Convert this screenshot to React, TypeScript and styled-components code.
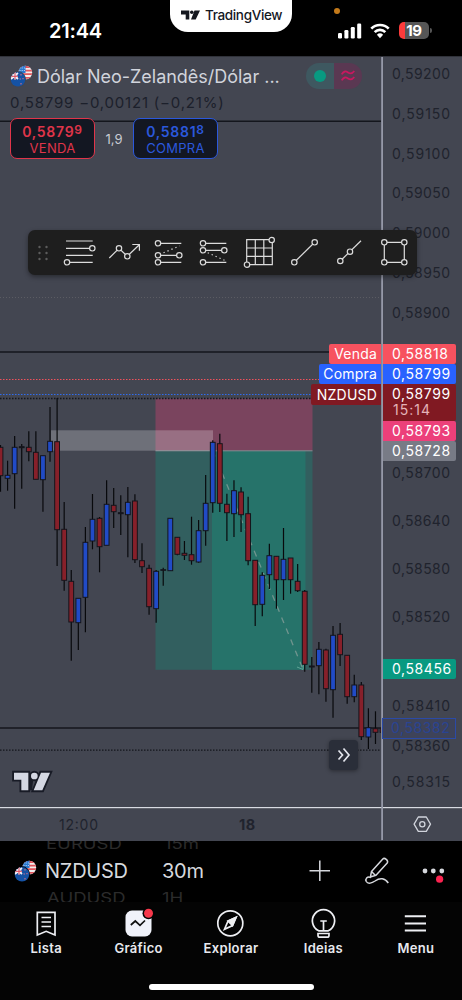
import React from "react";
import styled, { createGlobalStyle } from "styled-components";

const GlobalStyle = createGlobalStyle`
  * { box-sizing: border-box; }
  body { margin: 0; background: #000; }
  svg { display: block; }
`;

const Screen = styled.div`
  width: 462px;
  height: 1000px;
  display: flex;
  flex-direction: column;
  background: #000;
  overflow: hidden;
  font-family: Inter, "Liberation Sans", sans-serif;
  color: #fff;
  white-space: nowrap;
`;

/* Status bar */
const StatusBar = styled.header`
  height: 56px;
  flex: none;
  display: grid;
  grid-template-columns: 170px 122px 1fr;
`;
const Clock = styled.div`
  padding: 18px 0 0 49px;
  font-size: 20px;
  line-height: 26px;
  font-weight: 600;
  letter-spacing: -0.2px;
`;
const BrandPill = styled.div`
  height: 32px;
  display: flex;
  align-items: center;
  gap: 5px;
  padding: 0 0 3px 11px;
  background: #fff;
  color: #15181f;
  border-radius: 0 0 18px 18px;
  font-size: 13.5px;
  font-weight: 500;
  letter-spacing: -0.35px;
`;
const Indicators = styled.div`
  position: relative;
  display: flex;
  align-items: center;
  padding: 5px 0 0 46px;
`;
const MicDot = styled.span`
  position: absolute;
  left: 42px;
  top: 8px;
  width: 6px;
  height: 6px;
  border-radius: 50%;
  background: #c47a1a;
`;
const Battery = styled.div`
  width: 30px;
  height: 17px;
  margin-left: 9px;
  border-radius: 5px;
  background: linear-gradient(90deg, #fb3b3b 0 6px, #565656 6px);
  text-align: center;
  font-size: 15px;
  line-height: 17px;
  font-weight: 700;
  letter-spacing: -0.3px;
`;
const BatteryNub = styled.span`
  width: 2px;
  height: 5px;
  margin-left: 1px;
  border-radius: 0 2px 2px 0;
  background: #565656;
`;

/* Chart */
const Chart = styled.main`
  position: relative;
  height: 785px;
  flex: none;
  background: #434651;
`;
const Legend = styled.section`
  position: absolute;
  left: 10px;
  top: 6px;
  width: 360px;
  display: flex;
  flex-direction: column;
`;
const TitleRow = styled.div`
  display: flex;
  align-items: center;
  height: 28px;
`;
const Title = styled.div`
  width: 273px;
  flex: none;
  padding-left: 4px;
  font-size: 18px;
  color: #d1d4dc;
  letter-spacing: -0.02px;
`;
const StatusPill = styled.div`
  display: flex;
  width: 56px;
  height: 26px;
  border-radius: 13px;
  overflow: hidden;
`;
const PillHalf = styled.div<{ $bg: string }>`
  flex: 1;
  display: flex;
  align-items: center;
  justify-content: center;
  background: ${(p) => p.$bg};
`;
const LiveDot = styled.span`
  width: 12px;
  height: 12px;
  border-radius: 50%;
  background: #089981;
`;
const Change = styled.div`
  height: 26px;
  line-height: 26px;
  font-size: 15px;
  color: #1c202b;
  letter-spacing: 0.8px;
`;
const TradeRow = styled.div`
  display: flex;
  align-items: center;
  margin-top: 2px;
`;
const TradeButton = styled.button<{ $tone: string }>`
  width: 85px;
  height: 41px;
  padding: 1px 0 0;
  display: flex;
  flex-direction: column;
  align-items: center;
  justify-content: center;
  border: 1.5px solid ${(p) => p.$tone};
  border-radius: 7px;
  background: #131722;
  color: ${(p) => p.$tone};
  font-family: inherit;
`;
const Quote = styled.span`
  display: flex;
  font-size: 14px;
  line-height: 17px;
  font-weight: 600;
  letter-spacing: 0.7px;
`;
const Pip = styled.span`
  font-size: 12px;
  line-height: 13px;
`;
const Side = styled.span`
  font-size: 13px;
  line-height: 16px;
  letter-spacing: 0.3px;
`;
const Spread = styled.span`
  width: 38px;
  text-align: center;
  font-size: 13px;
  color: #c9cbd3;
`;

const Toolbar = styled.nav`
  position: absolute;
  left: 28px;
  top: 174px;
  width: 389px;
  height: 45px;
  display: flex;
  align-items: center;
  background: #1e1e1e;
  border-radius: 7px;
  box-shadow: 0 2px 5px rgba(0, 0, 0, 0.4);
`;
const Grip = styled.div`
  width: 29px;
  flex: none;
  padding-left: 9.5px;
`;

const TagStack = styled.div<{ $top: number }>`
  position: absolute;
  right: 6px;
  top: ${(p) => p.$top}px;
  display: flex;
  flex-direction: column;
  align-items: flex-end;
`;
const TagRow = styled.div`
  display: flex;
  align-items: flex-start;
`;
const TagName = styled.div<{ $bg: string; $w: number; $low?: boolean }>`
  width: ${(p) => p.$w}px;
  height: ${(p) => (p.$low ? 20.5 : 19.5)}px;
  line-height: ${(p) => (p.$low ? 22 : 20)}px;
  margin-right: 2px;
  padding-right: 4px;
  text-align: right;
  border-radius: 2px 0 0 2px;
  background: ${(p) => p.$bg};
  font-size: 14px;
  letter-spacing: 0.2px;
`;
const TagPrice = styled.div<{ $bg: string; $tall?: boolean }>`
  width: 73px;
  height: ${(p) => (p.$tall ? 36.5 : 20)}px;
  padding-left: 9px;
  border-radius: 0 2px 2px 0;
  background: ${(p) => p.$bg};
  font-size: 14px;
  line-height: 19px;
  letter-spacing: 0.58px;
`;
const Countdown = styled.div`
  padding-left: 1px;
  line-height: 14px;
  letter-spacing: 1px;
  color: #e3b3b8;
`;
const LastPrice = styled.div`
  width: 74px;
  height: 21px;
  padding-left: 8px;
  border: 1.5px solid #2b4aa6;
  background: #3e4359;
  color: #2a4391;
  font-size: 14px;
  line-height: 18px;
  letter-spacing: 0.58px;
`;
const ScrollButton = styled.button`
  position: absolute;
  left: 329px;
  top: 684px;
  width: 29px;
  height: 30px;
  padding: 0;
  display: flex;
  align-items: center;
  justify-content: center;
  border: 0;
  border-radius: 4px;
  background: #2a2e39;
  box-shadow: 0 1px 4px rgba(0, 0, 0, 0.4);
`;

/* Symbol bar */
const SymbolBar = styled.section`
  height: 61px;
  flex: none;
  display: flex;
  align-items: center;
  padding: 0 0 1px 14px;
  overflow: hidden;
`;
const Wheel = styled.div<{ $w: number }>`
  width: ${(p) => p.$w}px;
  display: flex;
  flex-direction: column;
`;
const SymbolWheel = styled(Wheel)`
  margin-left: 8px;
`;
const WheelItem = styled.span`
  height: 32px;
  line-height: 32px;
  font-size: 20px;
  letter-spacing: -0.25px;
  color: #d6d8dd;
`;
const WheelGhost = styled.span<{ $dx?: number }>`
  height: 22px;
  line-height: 22px;
  padding-left: ${(p) => p.$dx ?? 0}px;
  font-size: 18.5px;
  color: #2b2b2b;
  transform: scaleY(0.78);
`;
const Actions = styled.div`
  display: flex;
  align-items: center;
`;

/* Tab bar */
const TabBar = styled.nav`
  height: 98px;
  flex: none;
  display: flex;
  flex-direction: column;
  align-items: center;
  background: #040404;
`;
const Tabs = styled.div`
  width: 462px;
  height: 82px;
  display: grid;
  grid-template-columns: repeat(5, 1fr);
`;
const Tab = styled.div`
  display: flex;
  flex-direction: column;
  align-items: center;
  padding-top: 5px;
  font-size: 13px;
  line-height: 16px;
  font-weight: 600;
  letter-spacing: 0.3px;
  color: #e8e9ee;
`;
const HomeIndicator = styled.div`
  width: 165px;
  height: 6px;
  border-radius: 3px;
  background: #fff;
`;

type Candle = [number, number, number, number, "r" | "b" | "k"];

/* high, body top, body bottom, low, colour */
const candles: Candle[] = [
  [445, 447.3, 475.7, 491.7, "r"], [460.7, 475.3, 478.3, 490.7, "b"], [436, 447.3, 473.7, 508.7, "b"],
  [444, 446.7, 447.7, 488.7, "k"], [431.3, 447.3, 451.7, 461.3, "r"], [431.3, 452.3, 479.3, 479.3, "r"],
  [455.7, 455.7, 479.7, 511.7, "b"], [407, 441.3, 451.7, 461.7, "b"], [398, 441.7, 529.7, 566, "r"],
  [502, 529.3, 580.3, 590.7, "r"], [570, 581.3, 622, 660.7, "r"], [598.3, 598.3, 622.7, 650, "b"],
  [527, 542.3, 597.3, 632.3, "b"], [494, 519.3, 541, 549.3, "b"], [517, 518.3, 546.7, 572.3, "r"],
  [480.3, 504.3, 545.3, 545.3, "b"], [488, 505.3, 511.7, 528, "r"], [495.3, 512.7, 513.7, 535, "k"],
  [487, 502.3, 514.7, 557.3, "b"], [494.3, 501, 559.7, 563, "r"], [543.3, 560.7, 566.7, 573, "r"],
  [564.7, 568.3, 606.7, 614.7, "r"], [570, 571.3, 608.7, 622.7, "b"], [567.7, 569.7, 570.3, 585.7, "k"],
  [518.3, 518.3, 570.7, 570.7, "b"], [537.3, 537.3, 554.3, 555.3, "r"], [541, 553.3, 555.3, 560, "r"],
  [516.7, 554.7, 560.7, 564.7, "r"], [520, 530.7, 562, 562.7, "b"], [475, 503.3, 530.7, 545.7, "b"],
  [440.3, 442.3, 502.7, 512.7, "b"], [433.7, 443.7, 503.3, 512, "r"], [493.7, 504.3, 512.7, 541, "r"],
  [480.3, 490.7, 513.7, 537, "b"], [487.3, 492, 514.7, 532, "r"], [496.7, 513.7, 560.7, 565.3, "r"],
  [560.3, 560.3, 604.7, 626, "r"], [572.3, 575.3, 604.3, 616.3, "b"], [543.7, 555.7, 574.7, 589, "b"],
  [556.3, 556.3, 579.7, 608.7, "r"], [528, 559.3, 579.7, 600, "b"], [558, 558, 579.7, 593.7, "r"],
  [564, 581.3, 590.7, 592, "r"], [590, 591.3, 664.3, 671.7, "r"], [657, 666, 667, 692.7, "k"],
  [642, 649.3, 665.7, 694.3, "b"], [648.7, 650, 688.7, 701.7, "r"], [626, 635.3, 689.7, 717.7, "b"],
  [623, 634.3, 654.7, 666, "r"], [655.3, 655.3, 696.7, 703.7, "r"], [674.7, 685, 696.7, 702.3, "b"],
  [682, 685, 736.7, 740, "r"], [708.3, 727.7, 737, 749, "b"], [711.3, 728.7, 732.3, 744, "r"],
  [728.7, 728.7, 732.3, 732.3, "r"],
];
const fills = { r: "#87202a", b: "#214bc6", k: "#14171c" };

const ticks: [string, number][] = [
  ["0,59200", 74], ["0,59150", 113.5], ["0,59100", 153.5], ["0,59050", 193.2], ["0,59000", 233],
  ["0,58950", 272.8], ["0,58900", 312.6], ["0,58700", 472.7], ["0,58640", 520.7], ["0,58580", 568.7],
  ["0,58520", 616.7], ["0,58410", 706], ["0,58360", 746], ["0,58315", 782],
];

const PriceChart = () => (
  <svg width="462" height="785" viewBox="0 56 462 785" fontFamily="Inter, sans-serif">
    <defs>
      <clipPath id="plot"><rect x="0" y="56" width="381" height="751" /></clipPath>
    </defs>
    <rect x="0" y="56" width="462" height="1" fill="#30323a" />
    <g clipPath="url(#plot)">
      <path d="M0 121.3H381M0 352H381" stroke="#14161d" strokeWidth="1.4" />
      <path d="M0 297.5H381" stroke="#5b5c63" strokeDasharray="1 2" />
      <rect x="155.5" y="398.5" width="157" height="52" fill="#7a445e" />
      <rect x="155.5" y="451" width="157" height="218.8" fill="#325f5f" />
      <rect x="212" y="451" width="93.5" height="218.8" fill="#26736a" />
      <path d="M155.5 450.8H312.5" stroke="#8b8d93" strokeWidth="1" />
      <rect x="51" y="430.3" width="162" height="20.4" fill="#fff" opacity="0.23" />
      <path d="M213 451L302.5 668" stroke="#71958f" strokeWidth="1.3" strokeDasharray="6 6" />
      <path d="M297 667L303 669.5L303.5 662" stroke="#5fa597" strokeWidth="1" fill="none" />
      <path d="M0 379.5H381" stroke="#f0525c" strokeDasharray="1.5 1.5" />
      <path d="M0 394.5H381" stroke="#2f6cf0" strokeDasharray="1.5 1.5" />
      <path d="M0 398.5H381" stroke="#14161d" strokeWidth="1.3" strokeDasharray="1.5 1.5" />
      <path d="M0 728H381" stroke="#14161d" strokeWidth="1.5" />
      <path d="M0 750.2H381" stroke="#14161d" strokeWidth="1.2" strokeDasharray="1.5 1.5" />
      {candles.map(([high, top, bottom, low, tone], i) => {
        const x = 0.5 + i * 7.075;
        return (
          <g key={i}>
            <path d={`M${x} ${high}V${low}`} stroke="#08090c" strokeWidth="1.2" />
            <rect x={x - 2.4} y={top} width="4.8" height={Math.max(0.5, bottom - top)} fill={fills[tone]} stroke="#14151c" strokeWidth="1" />
          </g>
        );
      })}
    </g>
    {ticks.map(([label, y]) => (
      <text key={label} x="392" y={y + 5} fontSize="14" textLength="58" fill="#20232d">{label}</text>
    ))}
    <rect x="0" y="807" width="462" height="1.2" fill="#d9dbe2" />
    <rect x="381.2" y="57" width="1.8" height="783" fill="#9699a8" />
    <text x="59" y="829.5" fontSize="14" textLength="39" fill="#20232d">12:00</text>
    <text x="239" y="829.5" fontSize="14.5" fontWeight="700" letterSpacing="0.6" fill="#20232d">18</text>
    <g fill="none" stroke="#d1d4dc" strokeWidth="1.3">
      <path d="M418.3 817H426.3L430.5 824.2L426.3 831.4H418.3L414.1 824.2Z" strokeLinejoin="round" />
      <circle cx="422.3" cy="824.2" r="2.6" />
    </g>
    <g transform="translate(0 730) scale(.33333)">
      <g fill="#181b26" stroke="#181b26" strokeWidth="11">
        <path d="M42 128H85V181H64V149H42ZM123 128H150L127 181H101Z" />
        <circle cx="103" cy="138" r="10" />
        <path d="M85 145H100L96 181H85Z" stroke="none" />
      </g>
      <path d="M42 128H85V181H64V149H42ZM123 128H150L127 181H101Z" fill="#d4d7e2" />
      <circle cx="103" cy="138" r="10" fill="#d4d7e2" />
    </g>
  </svg>
);

const PairFlags = ({ ring }: { ring: string }) => (
  <svg width="23" height="23" viewBox="0 0 23 23">
    <defs>
      <clipPath id="us"><circle cx="15.3" cy="7.7" r="6.9" /></clipPath>
      <clipPath id="nz"><circle cx="8" cy="14.3" r="7.3" /></clipPath>
    </defs>
    <g clipPath="url(#us)">
      <rect x="8" width="15" height="15" fill="#f3ecec" />
      <path d="M8 2H23M8 5.6H23M8 9.2H23M8 12.8H23" stroke="#e0555c" strokeWidth="1.8" />
      <rect x="8" width="7.5" height="8" fill="#2878d0" />
      <path d="M9.5 3H15M9.5 5.5H15" stroke="#b9d8f5" strokeDasharray="1 1.2" />
    </g>
    <circle cx="8" cy="14.3" r="8" fill={ring} />
    <g clipPath="url(#nz)">
      <rect y="6" width="16" height="17" fill="#1552a4" />
      <path d="M1 8L8 14M8 8L1 14M0 11.5H8M5 7V14.5" stroke="#f4f1f5" strokeWidth="1.7" />
      <path d="M1 11.3H8M5 7V14.5" stroke="#d94254" strokeWidth="1" />
      <path d="M11 9V10.5M9.5 14H11M13 13V14.3M11 18V19.4" stroke="#c46f8c" strokeWidth="1.2" />
    </g>
  </svg>
);

const Dot = ({ x, y }: { x: number; y: number }) => <circle cx={x} cy={y} r="2.7" fill="#1e1e1e" />;

const tools: React.ReactNode[] = [
  <><path d="M9 11H35.7M9 18.3H33M9 25.3H35.7M12 32.3H35.7" /><Dot x={35.3} y={18.3} /><Dot x={10} y={32.3} /></>,
  <><path d="M7.3 28L17 18.3L25.3 26.3L37.3 14.7M30.3 14.5H37.4V20.7" /><Dot x={17} y={18.3} /><Dot x={25.3} y={26.3} /></>,
  <><path d="M11 13.3H34.3M11 25.3H32.3M11 32.3H34.3" /><path d="M16.5 22.8L32.5 15.9" strokeDasharray="1.3 3" /><Dot x={11} y={13.3} /><Dot x={11} y={25.3} /><Dot x={32.3} y={25.3} /><Dot x={11} y={32.3} /></>,
  <><path d="M11 13.3H34.3M11 20.3H32.3M11 32.3H34.3" /><path d="M15.7 22.7L32.5 30.3" strokeDasharray="1.3 3" /><Dot x={11} y={13.3} /><Dot x={11} y={20.3} /><Dot x={32.3} y={20.3} /><Dot x={11} y={32.3} /></>,
  <><path d="M9.7 9.7H35.3V34.7H9.7ZM18.3 9.7V34.7M26.8 9.7V34.7M9.7 18H35.3M9.7 26.4H35.3" /><Dot x={34.7} y={10} /><Dot x={10} y={34.7} /></>,
  <><path d="M12.3 32.3L32.7 12.3" /><Dot x={12.3} y={32.3} /><Dot x={32.7} y={12.3} /></>,
  <><path d="M13.3 31L34 10.7" /><Dot x={13.3} y={31} /><Dot x={23} y={21.7} /></>,
  <><path d="M12.3 12.3H32.3V32.3H12.3Z" /><Dot x={12.3} y={12.3} /><Dot x={32.3} y={12.3} /><Dot x={12.3} y={32.3} /><Dot x={32.3} y={32.3} /></>,
];

const tabs: [string, React.ReactNode][] = [
  ["Lista", <><path d="M7.3 5.3H25V28L16.2 24.3L7.3 28Z" /><path d="M11.5 10.5H21M11.5 15H21M11.5 19.5H21" /></>],
  ["Gráfico", <><rect x="3.5" y="3.5" width="26" height="26" rx="6.5" fill="#f0f2fa" stroke="none" /><path d="M8.8 18L13.3 14L18 18.3L23 13.5" stroke="#111" strokeWidth="1.7" /><circle cx="26.5" cy="6.3" r="6" fill="#040404" stroke="none" /><circle cx="26.5" cy="6.3" r="4.5" fill="#f7384b" stroke="none" /></>],
  ["Explorar", <><circle cx="16.3" cy="16.3" r="12.5" /><path d="M22 10.5L18.5 18.5L10.5 22.2L14 14.1Z" /><path d="M22 10.5L18.5 18.5L14 14.1Z" fill="#eee" /></>],
  ["Ideias", <><path d="M11.7 23.8A11.1 11.1 0 1 1 21.3 23.8Z" /><path d="M13.3 14H19.8M16.5 14V23.5" /><path d="M11 26.5H22V28.5C22 29.5 21 30.2 20 30.2H13C12 30.2 11 29.5 11 28.5Z" /></>],
  ["Menu", <path d="M5.8 9.3H27M5.8 16.5H27M5.8 23.6H27" strokeWidth="2" />],
];

export default function App() {
  return (
    <Screen>
      <GlobalStyle />
      <StatusBar>
        <Clock>21:44</Clock>
        <BrandPill>
          <svg width="19" height="10" viewBox="0 0 19 10" fill="#15181f">
            <path d="M0 .5H8.3V9.500H4.700V4.500H0ZM13.500 .5H19L14.700 9.500H10Z" />
            <circle cx="10.8" cy="2.3" r="1.8" />
          </svg>
          TradingView
        </BrandPill>
        <Indicators>
          <MicDot />
          <svg width="24" height="16" viewBox="0 0 24 16" fill="#fff">
            <rect x="0" y="10" width="4" height="5.5" rx="1.2" />
            <rect x="6.4" y="7" width="4" height="8.5" rx="1.2" />
            <rect x="12.8" y="4" width="4" height="11.5" rx="1.2" />
            <rect x="19.2" y="0.5" width="4" height="15" rx="1.2" />
          </svg>
          <WifiIcon width="20" height="16" viewBox="0 0 20 16">
            <path d="M1.3 5.6A12.3 12.3 0 0 1 18.7 5.6M4.7 9.1A7.5 7.5 0 0 1 15.3 9.1" fill="none" stroke="#fff" strokeWidth="2.7" />
            <path d="M6.9 11.7A4.5 4.5 0 0 1 13.1 11.7L10 15.2Z" fill="#fff" />
          </WifiIcon>
          <Battery>19</Battery>
          <BatteryNub />
        </Indicators>
      </StatusBar>

      <Chart>
        <PriceChart />
        <Legend>
          <TitleRow>
            <PairFlags ring="#434651" />
            <Title>Dólar Neo-Zelandês/Dólar ...</Title>
            <StatusPill>
              <PillHalf $bg="#3e5860"><LiveDot /></PillHalf>
              <PillHalf $bg="#5a3852">
                <svg width="14" height="12" viewBox="0 0 14 12" fill="none" stroke="#c8185f" strokeWidth="1.8">
                  <path d="M.7 4.3C3 .5 5 1.2 7 2.5C9 3.8 11 4 13.3 1M.7 10.3C3 6.5 5 7.2 7 8.5C9 9.8 11 10 13.3 7" />
                </svg>
              </PillHalf>
            </StatusPill>
          </TitleRow>
          <Change>0,58799 −0,00121 (−0,21%)</Change>
          <TradeRow>
            <TradeButton $tone="#e0354a">
              <Quote>0,5879<Pip>9</Pip></Quote>
              <Side>VENDA</Side>
            </TradeButton>
            <Spread>1,9</Spread>
            <TradeButton $tone="#2b58dc">
              <Quote>0,5881<Pip>8</Pip></Quote>
              <Side>COMPRA</Side>
            </TradeButton>
          </TradeRow>
        </Legend>

        <Toolbar>
          <Grip>
            <svg width="12" height="18" viewBox="0 0 12 18" fill="#5c5c5c">
              {[3, 9, 15].map((y) => (
                <g key={y}><circle cx="1.5" cy={y} r="1.2" /><circle cx="8.5" cy={y} r="1.2" /></g>
              ))}
            </svg>
          </Grip>
          {tools.map((tool, i) => (
            <svg key={i} width="45" height="45" viewBox="0 0 45 45" fill="none" stroke="#dcdcdc" strokeWidth="1.2">{tool}</svg>
          ))}
        </Toolbar>

        <TagStack $top={288}>
          <TagRow><TagName $bg="#f7525f" $w={52}>Venda</TagName><TagPrice $bg="#f7525f">0,58818</TagPrice></TagRow>
          <TagRow><TagName $bg="#2962ff" $w={62}>Compra</TagName><TagPrice $bg="#2962ff">0,58799</TagPrice></TagRow>
          <TagRow>
            <TagName $bg="#801922" $w={70} $low>NZDUSD</TagName>
            <TagPrice $bg="#801922" $tall>0,58799<Countdown>15:14</Countdown></TagPrice>
          </TagRow>
          <TagPrice $bg="#ec407a">0,58793</TagPrice>
          <TagPrice $bg="#787b86">0,58728</TagPrice>
        </TagStack>
        <TagStack $top={603}><TagPrice $bg="#089981">0,58456</TagPrice></TagStack>
        <TagStack $top={662}><LastPrice>0,58382</LastPrice></TagStack>

        <ScrollButton>
          <svg width="14" height="16" viewBox="0 0 14 16" fill="none" stroke="#e4e6ee" strokeWidth="1.7">
            <path d="M1.5 3.5L5.5 8L1.5 12.5M6.5 1.5L12 8L6.5 14.5" />
          </svg>
        </ScrollButton>
      </Chart>

      <SymbolBar>
        <PairFlags ring="#000" />
        <SymbolWheel $w={117}>
          <WheelGhost $dx={1}>EURUSD</WheelGhost>
          <WheelItem>NZDUSD</WheelItem>
          <WheelGhost $dx={2}>AUDUSD</WheelGhost>
        </SymbolWheel>
        <Wheel $w={147}>
          <WheelGhost $dx={2}>15m</WheelGhost>
          <WheelItem>30m</WheelItem>
          <WheelGhost>1H</WheelGhost>
        </Wheel>
        <Actions>
          <svg width="137" height="40" viewBox="309 851 137 40" fill="none" stroke="#d6d8dd" strokeWidth="1.5">
            <path d="M309.500 870.8H330M319.8 860.5V881" />
            <path d="M370.5 876.3L371.5 871.5L382.8 859C384.5 857.2 388.8 860.5 387.2 863L376 875.2L371 876.8ZM371.5 871.5L375.5 875.5" strokeLinejoin="round" />
            <path d="M371 877.5C367 876 365 879 366.3 881.5C368 884.5 372 883 375 881C380 877.5 385 878 388.3 883" />
            <g fill="#d6d8dd" stroke="none"><circle cx="425" cy="871" r="2.4" /><circle cx="433.3" cy="871" r="2.4" /><circle cx="441.8" cy="871" r="2.4" /></g>
            <circle cx="439.6" cy="879.2" r="3.6" fill="#fb2350" stroke="none" />
          </svg>
        </Actions>
      </SymbolBar>

      <TabBar>
        <Tabs>
          {tabs.map(([label, icon]) => (
            <Tab key={label}>
              <svg width="33" height="33" viewBox="0 0 33 33" fill="none" stroke="#eeeff3" strokeWidth="1.7">{icon}</svg>
              {label}
            </Tab>
          ))}
        </Tabs>
        <HomeIndicator />
      </TabBar>
    </Screen>
  );
}

const WifiIcon = styled.svg`
  margin-left: 8px;
`;
